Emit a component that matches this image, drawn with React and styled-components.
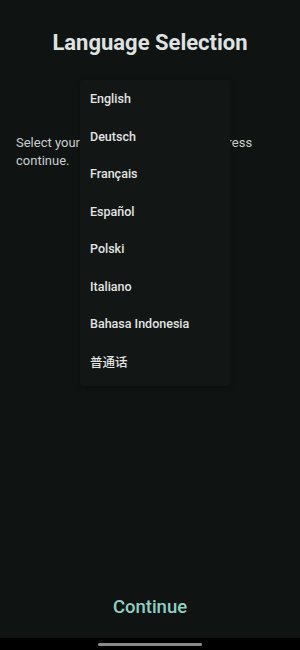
import React from "react";
import styled, { createGlobalStyle } from "styled-components";

const languages = [
  "English",
  "Deutsch",
  "Français",
  "Español",
  "Polski",
  "Italiano",
  "Bahasa Indonesia",
  "普通话",
];

const GlobalStyle = createGlobalStyle`
  html, body {
    margin: 0;
    padding: 0;
    background: #0f1413;
  }
  body {
    font-family: Roboto, "Noto Sans", "Noto Sans CJK SC", sans-serif;
  }
`;

const App = () => {
  return (
    <>
      <GlobalStyle />
      <Screen>
        <Content>
          <Title>Language Selection</Title>
          <Description>
            Select your preferred language and press continue.
          </Description>
        </Content>

        <Footer>
          <ContinueButton>Continue</ContinueButton>
        </Footer>

        <NavBar>
          <Handle />
        </NavBar>

        <Menu>
          {languages.map((lang) => (
            <MenuItem key={lang}>{lang}</MenuItem>
          ))}
        </Menu>
      </Screen>
    </>
  );
};

const Screen = styled.div`
  position: relative;
  width: 300px;
  height: 650px;
  display: flex;
  flex-direction: column;
  background: #0f1413;
  overflow: hidden;
`;

const Content = styled.div`
  flex: 1;
  display: flex;
  flex-direction: column;
  padding: 30px 16px 0;
`;

const Title = styled.h1`
  margin: 0;
  text-align: center;
  font-size: 22px;
  font-weight: 700;
  line-height: 26px;
  color: #dee3e1;
`;

const Description = styled.p`
  margin: 78px 0 0;
  font-size: 13px;
  line-height: 18px;
  color: #c9cecc;
`;

const Footer = styled.div`
  display: flex;
  justify-content: center;
  padding-bottom: 19px;
`;

const ContinueButton = styled.button`
  border: none;
  background: none;
  padding: 0;
  font-family: inherit;
  font-size: 18.5px;
  font-weight: 500;
  line-height: 24px;
  color: #8fd0c5;
  cursor: pointer;
`;

const NavBar = styled.div`
  height: 12px;
  background: #000;
  display: flex;
  justify-content: center;
  padding-top: 5px;
  box-sizing: border-box;
`;

const Handle = styled.div`
  width: 104px;
  height: 3px;
  border-radius: 2px;
  background: #8a8a8a;
`;

const Menu = styled.ul`
  position: absolute;
  top: 80px;
  left: 80px;
  width: 150px;
  margin: 0;
  padding: 0 0 6px;
  list-style: none;
  background: #121716;
  border-radius: 3px;
  box-shadow: 0 2px 5px rgba(0, 0, 0, 0.25);
`;

const MenuItem = styled.li`
  height: 37.5px;
  display: flex;
  align-items: center;
  padding: 0 10px;
  font-size: 12.5px;
  font-weight: 500;
  color: #e1e4e2;
`;

export default App;
